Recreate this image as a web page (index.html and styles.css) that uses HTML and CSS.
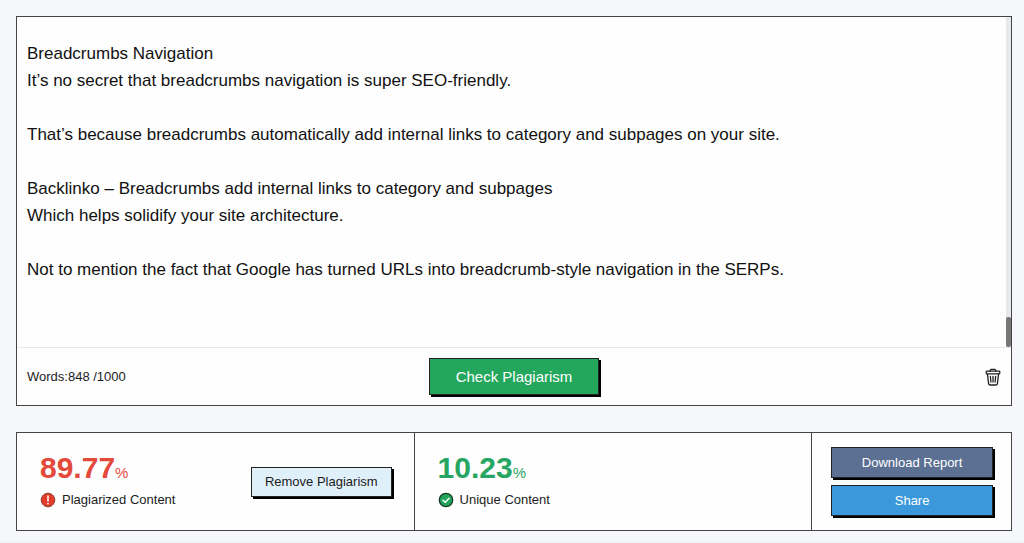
FILE: index.html
```html
<!DOCTYPE html>
<html lang="en">
  <head>
    <meta charset="UTF-8" />
    <meta name="viewport" content="width=device-width, initial-scale=1.0" />
    <title>Plagiarism Checker</title>
    <link rel="stylesheet" href="styles.css">
  </head>
  <body>
    <main class="container">
      <section class="editor">
        <textarea id="content" class="editor-text" aria-label="Content" spellcheck="false">








Breadcrumbs Navigation
It’s no secret that breadcrumbs navigation is super SEO-friendly.

That’s because breadcrumbs automatically add internal links to category and subpages on your site.

Backlinko – Breadcrumbs add internal links to category and subpages
Which helps solidify your site architecture.

Not to mention the fact that Google has turned URLs into breadcrumb-style navigation in the SERPs.

</textarea>
        <div class="scrollbar"><div class="scrollbar-thumb"></div></div>
        <div class="editor-bar">
          <span class="words">Words:848 /1000</span>
          <button type="button" class="btn btn-check">Check Plagiarism</button>
          <button type="button" class="clear" aria-label="Clear text">
            <svg width="16" height="18" viewBox="0 0 16 18" fill="none" stroke="#222" stroke-width="1.3" stroke-linecap="round" stroke-linejoin="round">
              <path d="M5 3.200L5.800 1.400h4.400L11 3.200" />
              <rect x="1.200" y="3.200" width="13.600" height="2.600" rx=".8" />
              <path d="M2.400 5.800l1.200 9.800q.2 1.400 1.600 1.400h5.600q1.400 0 1.600-1.400l1.200-9.800" />
              <path d="M5.400 8.500l.5 5.500M8 8.500v5.500M10.600 8.500l-.5 5.500" />
            </svg>
          </button>
        </div>
      </section>

      <section class="results">
        <div class="result plagiarized">
          <div class="result-info">
            <p class="score">89.77<small>%</small></p>
            <p class="label">
              <svg width="16" height="16" viewBox="0 0 16 16">
                <circle cx="8" cy="8" r="6.800" fill="#e53b2c" stroke="#8e3a30" />
                <path d="M8 4v5" stroke="#fff" stroke-width="1.500" stroke-linecap="round" />
                <circle cx="8" cy="11.600" r=".9" fill="#fff" />
              </svg>
              Plagiarized Content
            </p>
          </div>
          <button type="button" class="btn btn-remove">Remove Plagiarism</button>
        </div>
        <div class="result unique">
          <div class="result-info">
            <p class="score">10.23<small>%</small></p>
            <p class="label">
              <svg width="16" height="16" viewBox="0 0 16 16">
                <circle cx="8" cy="8" r="6.700" fill="#22a55b" stroke="#173d29" stroke-width="1.300" />
                <path d="M5 8.300l2.200 2 3.900-4" fill="none" stroke="#fff" stroke-width="1.400" stroke-linecap="round" stroke-linejoin="round" />
              </svg>
              Unique Content
            </p>
          </div>
        </div>
        <div class="actions">
          <button type="button" class="btn btn-download">Download Report</button>
          <button type="button" class="btn btn-share">Share</button>
        </div>
      </section>
    </main>
    <script>
      // Keep the end of the text in view
      const content = document.getElementById("content");
      content.scrollTop = content.scrollHeight;
    </script>
  </body>
</html>
```
FILE: styles.css
```css
* {
  box-sizing: border-box;
}
body {
  font-family: "Liberation Sans", Arial, sans-serif;
  margin: 0;
  background-color: #f0f1f5;
  color: #1c1c1c;
}
.container {
  padding: 16px 12px 10px 16px;
  background-color: #f5f7fb;
}
.editor,
.results {
  background-color: #fefefe;
  border: 1px solid #444;
}
.editor {
  position: relative;
}
.editor-text {
  display: block;
  width: 100%;
  height: 330px;
  padding: 10px;
  border: none;
  outline: none;
  resize: none;
  overflow-y: scroll;
  scrollbar-width: none;
  background-color: transparent;
  color: #111;
  font-family: inherit;
  font-size: 17px;
  line-height: 27px;
}
/* thin scrollbar over the right edge of the text */
.scrollbar {
  position: absolute;
  top: 0;
  right: 0;
  display: flex;
  align-items: flex-end;
  width: 5px;
  height: 330px;
  background-color: #e8e9eb;
}
.scrollbar-thumb {
  width: 100%;
  height: 30px;
  background-color: #777;
  border-radius: 2px;
}
.editor-bar {
  display: grid;
  grid-template-columns: 1fr auto 1fr;
  align-items: center;
  height: 58px;
  padding: 0 10px;
  border-top: 1px solid #e6e8ec;
}
.words {
  font-size: 13px;
}
.btn {
  padding: 0 13px;
  border: 1px solid #222;
  box-shadow: 2px 2px 0 #000;
  font-family: inherit;
  font-size: 13px;
  color: #fff;
  cursor: pointer;
}
.btn-check {
  height: 37px;
  padding: 0 26px;
  background-color: #22a75d;
  font-size: 15px;
}
.clear {
  display: flex;
  justify-self: end;
  padding: 0;
  border: none;
  background: none;
  cursor: pointer;
}
.results {
  display: grid;
  grid-template-columns: 2fr 2fr 1fr;
  margin-top: 26px;
}
.result {
  display: flex;
  align-items: center;
  justify-content: space-between;
  padding: 14px 22px 14px 23px;
  border-right: 1px solid #444;
}
.result-info {
  padding-bottom: 4px;
}
.score {
  margin: 0;
  font-size: 30px;
  font-weight: bold;
  line-height: 36px;
}
.score small {
  font-size: 15px;
  font-weight: normal;
  line-height: 1;
}
.plagiarized .score {
  color: #e34a3b;
}
.unique .score {
  color: #27a663;
}
.label {
  display: flex;
  align-items: center;
  gap: 6px;
  margin: 4px 0 0;
  font-size: 13px;
  line-height: 20px;
}
.btn-remove {
  height: 30px;
  background-color: #e0f0fb;
  color: #1c1c1c;
}
.actions {
  display: flex;
  flex-direction: column;
  justify-content: center;
  gap: 7px;
  padding: 14px 18px 14px 19px;
}
.btn-download,
.btn-share {
  height: 31px;
}
.btn-download {
  background-color: #5b7093;
}
.btn-share {
  background-color: #3b98db;
}
@media (max-width: 700px) {
  .results {
    grid-template-columns: 1fr;
  }
  .result {
    border-right: none;
    border-bottom: 1px solid #444;
  }
}
```
